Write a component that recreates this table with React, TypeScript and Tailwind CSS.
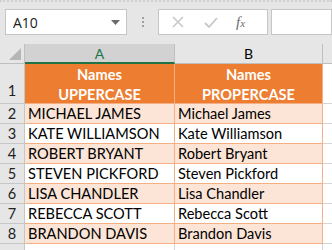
const rows = [
  ['MICHAEL JAMES', 'Michael James'],
  ['KATE WILLIAMSON', 'Kate Williamson'],
  ['ROBERT BRYANT', 'Robert Bryant'],
  ['STEVEN PICKFORD', 'Steven Pickford'],
  ['LISA CHANDLER', 'Lisa Chandler'],
  ['REBECCA SCOTT', 'Rebecca Scott'],
  ['BRANDON DAVIS', 'Brandon Davis'],
];

export default function App() {
  return (
    <div className="w-[332px] h-[250px] overflow-hidden bg-white font-['Lato',sans-serif] text-[14.6px] text-black">
      {/* Formula bar */}
      <div className="h-[44px] bg-[#e6e6e6] border-t-2 border-dotted border-[#d0d0d0] flex items-start pt-[7px] pl-[5px]">
        <div className="w-[122px] h-[26px] bg-white border border-[#c6c6c6] flex items-center pl-[7px] pr-[6px]">
          <span className="flex-1 font-['Open_Sans',sans-serif] text-[14px] text-[#222]">A10</span>
          <svg width="9" height="5" viewBox="0 0 9 5">
            <path d="M0 0h9L4.5 5z" fill="#6b6b6b" />
          </svg>
        </div>
        <div className="w-[31px] h-[26px] flex flex-col items-center justify-center gap-[2px]">
          <span className="w-[2px] h-[2px] bg-[#a0a0a0]" />
          <span className="w-[2px] h-[2px] bg-[#a0a0a0]" />
          <span className="w-[2px] h-[2px] bg-[#a0a0a0]" />
        </div>
        <div className="w-[110px] h-[26px] bg-white border border-[#c6c6c6] flex items-center">
          <svg className="ml-[13px]" width="12" height="12" viewBox="0 0 12 12">
            <path d="M1 1l10 10M11 1L1 11" stroke="#c8c8c8" strokeWidth="1.6" />
          </svg>
          <svg className="ml-[20px]" width="14" height="11" viewBox="0 0 14 11">
            <path d="M1 6l4 4 8-9" stroke="#c8c8c8" strokeWidth="1.8" fill="none" />
          </svg>
          <span className="ml-[18px] font-['Liberation_Serif',serif] italic text-[15px] text-[#6b6b6b]">
            f<span className="text-[11px]">x</span>
          </span>
        </div>
        <div className="ml-[3px] flex-1 h-[26px] bg-white border border-[#c6c6c6]" />
      </div>

      {/* Sheet */}
      <div className="grid grid-cols-[25px_150px_148px_1fr]">
        {/* Column headings */}
        <div className="h-[20px] bg-[#e6e6e6] border-r border-b border-[#bfbfbf] flex items-end justify-end pr-[3px] pb-[3px]">
          <svg width="12" height="12" viewBox="0 0 12 12">
            <path d="M12 0v12H0z" fill="#b5b5b5" />
          </svg>
        </div>
        <div className="h-[20px] bg-[#d2d2d2] border-r border-[#bfbfbf] border-b-2 border-b-[#217346] flex items-center justify-center text-[#217346] text-[14px]">
          A
        </div>
        <div className="h-[20px] bg-[#e6e6e6] border-r border-b border-[#bfbfbf] flex items-center justify-center text-[14px]">
          B
        </div>
        <div className="h-[20px] bg-[#e6e6e6] border-b border-[#bfbfbf]" />

        {/* Row 1: headings */}
        <div className="h-[40px] bg-[#e6e6e6] border-r border-b border-[#c6c6c6] flex items-end justify-center pb-[1px] text-[#222]">
          1
        </div>
        <div className="h-[40px] bg-[#ed7d31] border-r border-b border-[#f4b084] flex flex-col items-center justify-center pt-[3px] font-bold text-white leading-[20px]">
          <span>Names</span>
          <span>UPPERCASE</span>
        </div>
        <div className="h-[40px] bg-[#ed7d31] border-r border-b border-[#f4b084] flex flex-col items-center justify-center pt-[3px] font-bold text-white leading-[20px]">
          <span>Names</span>
          <span>PROPERCASE</span>
        </div>
        <div className="h-[40px] border-b border-[#d4d4d4]" />

        {rows.map(([upper, proper], i) => {
          const band = i % 2 === 0 ? 'bg-[#fce4d6]' : 'bg-white';
          return (
            <div key={i} className="contents">
              <div className="h-[20px] bg-[#e6e6e6] border-r border-b border-[#c6c6c6] flex items-center justify-center text-[#222]">
                {i + 2}
              </div>
              <div className={`h-[20px] ${band} border-r border-b border-[#f4b084] flex items-center pl-[3px] whitespace-nowrap`}>
                {upper}
              </div>
              <div className={`h-[20px] ${band} border-r border-b border-[#f4b084] flex items-center pl-[3px] whitespace-nowrap`}>
                {proper}
              </div>
              <div className="h-[20px] border-b border-[#d4d4d4]" />
            </div>
          );
        })}

        {/* Row 9 */}
        <div className="h-[20px] bg-[#e6e6e6] border-r border-[#c6c6c6]" />
        <div className="h-[20px] border-r border-[#d4d4d4]" />
        <div className="h-[20px] border-r border-[#d4d4d4]" />
        <div className="h-[20px]" />
      </div>
    </div>
  );
}
